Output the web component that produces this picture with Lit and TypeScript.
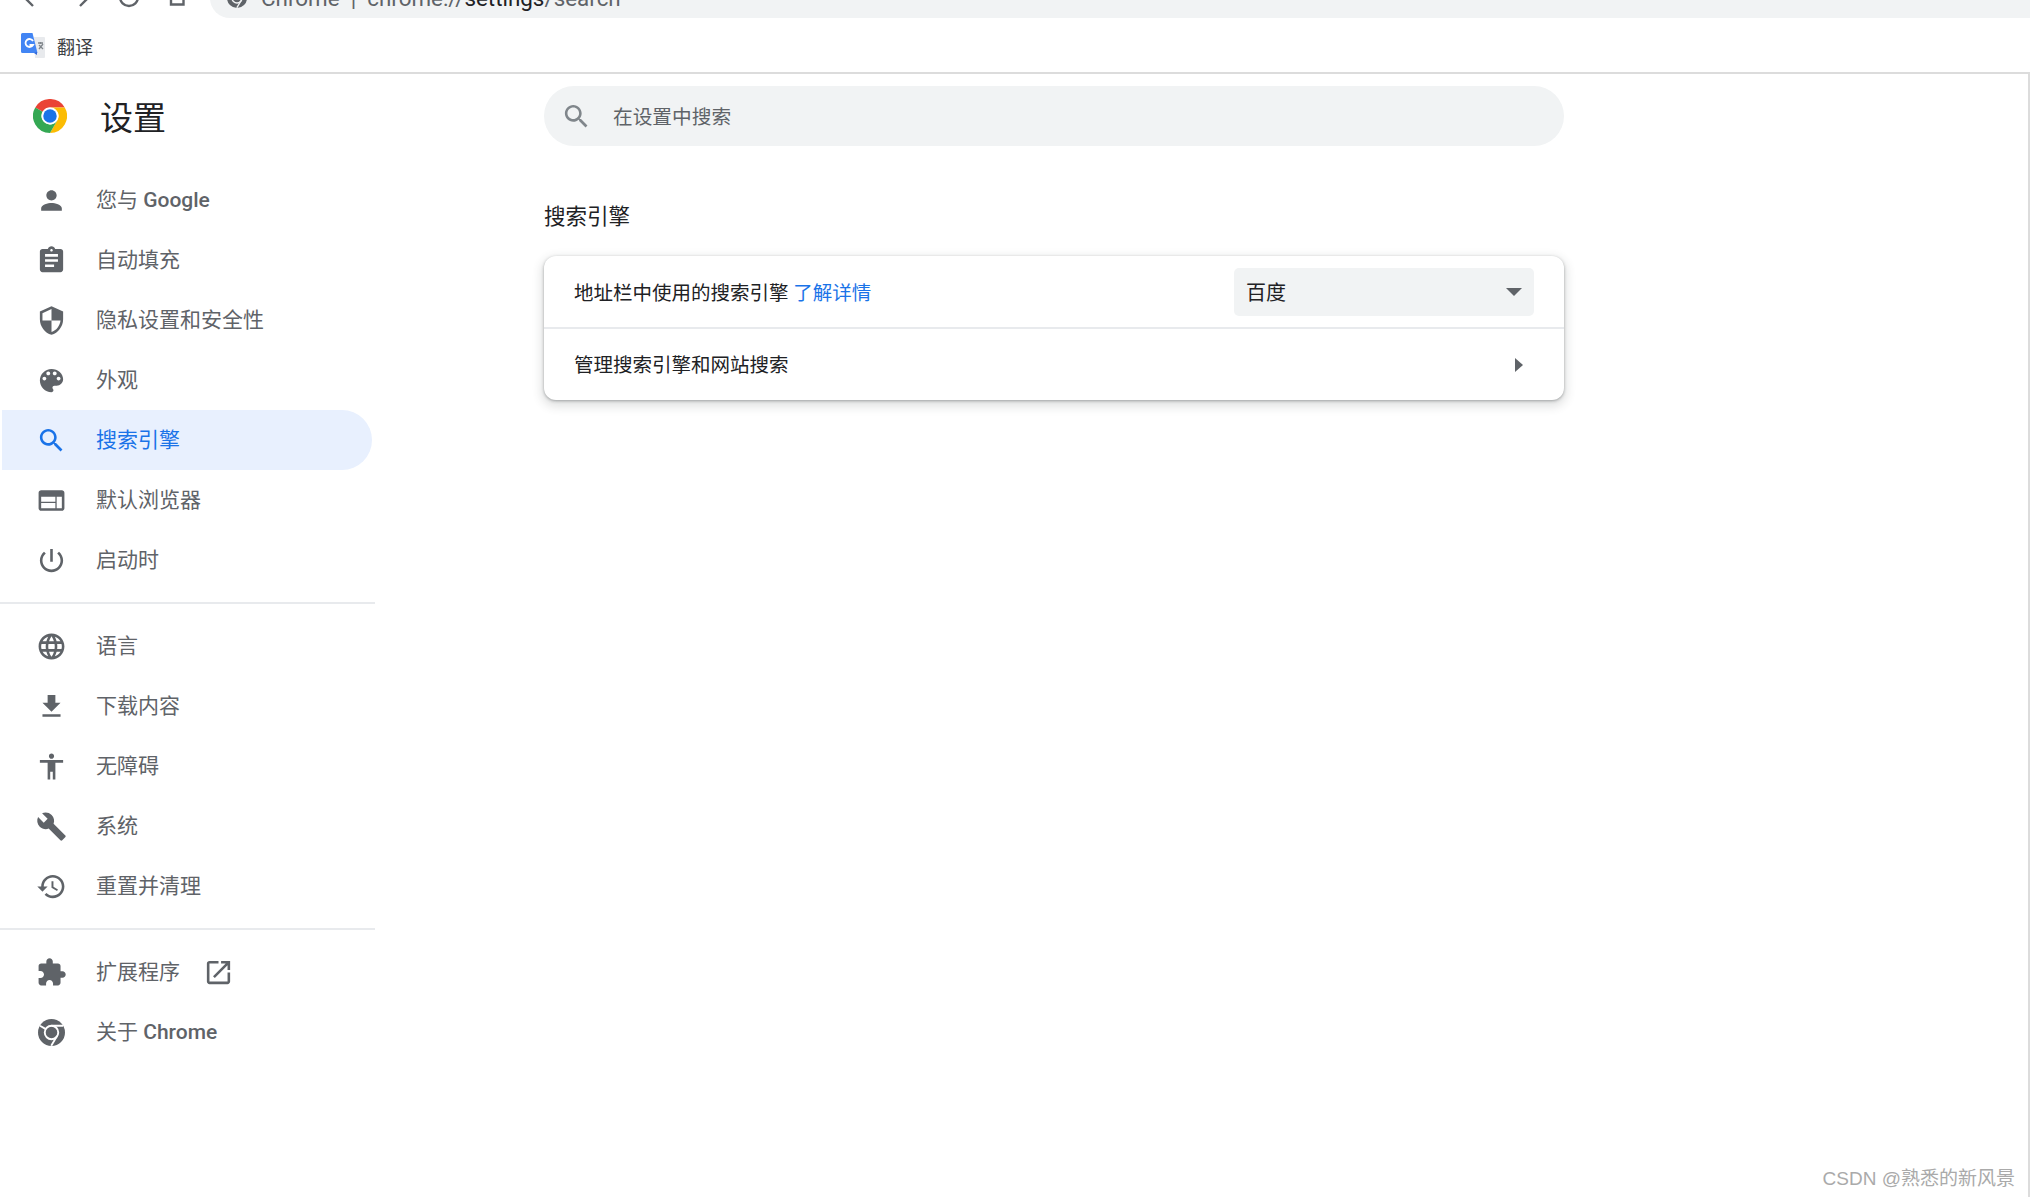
import { LitElement, html, css, svg } from "lit";
import { customElement } from "lit/decorators.js";

const P: Record<string, string> = {
  person: "M12 12c2.21 0 4-1.79 4-4s-1.79-4-4-4-4 1.79-4 4 1.79 4 4 4zm0 2c-2.67 0-8 1.34-8 4v2h16v-2c0-2.66-5.33-4-8-4z",
  assignment: "M19 3h-4.18C14.4 1.84 13.3 1 12 1c-1.3 0-2.4.84-2.82 2H5c-1.1 0-2 .9-2 2v14c0 1.1.9 2 2 2h14c1.1 0 2-.9 2-2V5c0-1.1-.9-2-2-2zm-7 0c.55 0 1 .45 1 1s-.45 1-1 1-1-.45-1-1 .45-1 1-1zm2 14H7v-2h7v2zm3-4H7v-2h10v2zm0-4H7V7h10v2z",
  security: "M12 1L3 5v6c0 5.55 3.84 10.74 9 12 5.16-1.26 9-6.45 9-12V5l-9-4zm0 10.99h7c-.53 4.12-3.28 7.79-7 8.94V12H5V6.3l7-3.11v8.8z",
  palette: "M12 3c-4.97 0-9 4.03-9 9s4.03 9 9 9c.83 0 1.5-.67 1.5-1.5 0-.39-.15-.74-.39-1.01-.23-.26-.38-.61-.38-.99 0-.83.67-1.5 1.5-1.5H16c2.76 0 5-2.24 5-5 0-4.42-4.03-8-9-8zm-5.5 9c-.83 0-1.5-.67-1.5-1.5S5.67 9 6.5 9 8 9.67 8 10.5 7.33 12 6.5 12zm3-4C8.67 8 8 7.33 8 6.5S8.67 5 9.5 5s1.5.67 1.5 1.5S10.33 8 9.5 8zm5 0c-.83 0-1.5-.67-1.5-1.5S13.67 5 14.5 5s1.5.67 1.5 1.5S15.33 8 14.5 8zm3 4c-.83 0-1.5-.67-1.5-1.5S16.67 9 17.5 9s1.5.67 1.5 1.5-.67 1.5-1.5 1.5z",
  search: "M15.5 14h-.79l-.28-.27C15.41 12.59 16 11.11 16 9.5 16 5.91 13.09 3 9.5 3S3 5.91 3 9.5 5.91 16 9.5 16c1.61 0 3.09-.59 4.23-1.57l.27.28v.79l5 4.99L20.49 19l-4.99-5zm-6 0C7.01 14 5 11.99 5 9.5S7.01 5 9.5 5 14 7.01 14 9.5 11.99 14 9.5 14z",
  web: "M20 4H4c-1.1 0-1.99.9-1.99 2L2 18c0 1.1.9 2 2 2h16c1.1 0 2-.9 2-2V6c0-1.1-.9-2-2-2zm-5 14H4v-4h11v4zm0-5H4V9h11v4zm5 5h-4V9h4v9z",
  power: "M13 3h-2v10h2V3zm4.83 2.17l-1.42 1.42C17.99 7.86 19 9.81 19 12c0 3.87-3.13 7-7 7s-7-3.13-7-7c0-2.19 1.01-4.14 2.58-5.42L6.17 5.17C4.23 6.82 3 9.26 3 12c0 4.97 4.03 9 9 9s9-4.03 9-9c0-2.74-1.23-5.18-3.17-6.83z",
  language: "M11.99 2C6.47 2 2 6.48 2 12s4.47 10 9.99 10C17.52 22 22 17.52 22 12S17.52 2 11.99 2zm6.93 6h-2.95c-.32-1.25-.78-2.45-1.38-3.56 1.84.63 3.37 1.91 4.33 3.56zM12 4.04c.83 1.2 1.48 2.53 1.91 3.96h-3.82c.43-1.43 1.08-2.76 1.91-3.96zM4.26 14C4.1 13.36 4 12.69 4 12s.1-1.36.26-2h3.38c-.08.66-.14 1.32-.14 2 0 .68.06 1.34.14 2H4.26zm.82 2h2.95c.32 1.25.78 2.45 1.38 3.56-1.84-.63-3.37-1.9-4.33-3.56zm2.95-8H5.08c.96-1.66 2.49-2.93 4.33-3.56C8.81 5.55 8.35 6.75 8.03 8zM12 19.96c-.83-1.2-1.48-2.53-1.91-3.96h3.82c-.43 1.43-1.08 2.76-1.91 3.96zM14.34 14H9.66c-.09-.66-.16-1.32-.16-2 0-.68.07-1.35.16-2h4.68c.09.65.16 1.32.16 2 0 .68-.07 1.34-.16 2zm.25 5.56c.6-1.11 1.06-2.31 1.38-3.56h2.95c-.96 1.65-2.49 2.93-4.33 3.56zM16.36 14c.08-.66.14-1.32.14-2 0-.68-.06-1.34-.14-2h3.38c.16.64.26 1.31.26 2s-.1 1.36-.26 2h-3.38z",
  download: "M19 9h-4V3H9v6H5l7 7 7-7zM5 18v2h14v-2H5z",
  accessibility: "M12 2c1.1 0 2 .9 2 2s-.9 2-2 2-2-.9-2-2 .9-2 2-2zm9 7h-6v13h-2v-6h-2v6H9V9H3V7h18v2z",
  build: "M22.7 19l-9.1-9.1c.9-2.3.4-5-1.5-6.9-2-2-5-2.4-7.4-1.3L9 6 6 9 1.6 4.7C.4 7.1.9 10.1 2.9 12.1c1.9 1.9 4.6 2.4 6.9 1.5l9.1 9.1c.4.4 1 .4 1.4 0l2.3-2.3c.5-.4.5-1.1.1-1.4z",
  restore: "M13 3c-4.97 0-9 4.03-9 9H1l3.89 3.89.07.14L9 12H6c0-3.87 3.13-7 7-7s7 3.13 7 7-3.13 7-7 7c-1.93 0-3.68-.79-4.94-2.06l-1.42 1.42C8.27 19.99 10.51 21 13 21c4.97 0 9-4.03 9-9s-4.03-9-9-9zm-1 5v5l4.28 2.54.72-1.21-3.5-2.08V8H12z",
  extension: "M20.5 11H19V7c0-1.1-.9-2-2-2h-4V3.5C13 2.12 11.88 1 10.5 1S8 2.12 8 3.5V5H4c-1.1 0-1.99.9-1.99 2v3.8H3.5c1.49 0 2.7 1.21 2.7 2.7s-1.21 2.7-2.7 2.7H2V20c0 1.1.9 2 2 2h3.8v-1.5c0-1.49 1.21-2.7 2.7-2.7 1.49 0 2.7 1.21 2.7 2.7V22H17c1.1 0 2-.9 2-2v-4h1.5c1.38 0 2.5-1.12 2.5-2.5S21.88 11 20.5 11z",
  open: "M19 19H5V5h7V3H5c-1.11 0-2 .9-2 2v14c0 1.1.89 2 2 2h14c1.1 0 2-.9 2-2v-7h-2v7zM14 3v2h3.59l-9.83 9.83 1.41 1.41L19 6.41V10h2V3h-7z",
};

const icon = (name: string) => html`<svg class="ic" viewBox="0 0 24 24"><path d=${P[name]} fill="currentColor"></path></svg>`;

const monoChrome = (cls: string, gap: string) => html`<svg class=${cls} viewBox="0 0 48 48">
  <circle cx="24" cy="24" r="24" fill="#5f6368"></circle>
  <circle cx="24" cy="24" r="12" fill="none" stroke=${gap} stroke-width="3.4"></circle>
  <path d="M24 12H44.5M14 18L3.5 12M34 30L23.5 47.5" fill="none" stroke=${gap} stroke-width="3.4"></path>
</svg>`;

type Item = { icon: string; label: unknown; active?: boolean; ext?: boolean; chrome?: boolean };
const latin = (t: string) => html`<span class="latin">${t}</span>`;
const groups: Item[][] = [
  [
    { icon: "person", label: html`您与 ${latin("Google")}` },
    { icon: "assignment", label: "自动填充" },
    { icon: "security", label: "隐私设置和安全性" },
    { icon: "palette", label: "外观" },
    { icon: "search", label: "搜索引擎", active: true },
    { icon: "web", label: "默认浏览器" },
    { icon: "power", label: "启动时" },
  ],
  [
    { icon: "language", label: "语言" },
    { icon: "download", label: "下载内容" },
    { icon: "accessibility", label: "无障碍" },
    { icon: "build", label: "系统" },
    { icon: "restore", label: "重置并清理" },
  ],
  [
    { icon: "extension", label: "扩展程序", ext: true },
    { icon: "", label: html`关于 ${latin("Chrome")}`, chrome: true },
  ],
];

@customElement("app-root")
export class AppRoot extends LitElement {
  static styles = css`
    :host {
      display: block;
      position: relative;
      width: 2030px;
      height: 1197px;
      overflow: hidden;
      background: #fff;
      font-family: Roboto, "Noto Sans CJK SC", sans-serif;
      color: #202124;
    }
    .toolbar { height: 18px; overflow: hidden; }
    .toolbar-row { display: flex; height: 40px; margin-top: -22px; }
    .nav { width: 210px; height: 40px; flex: none; }
    .omnibox {
      flex: 1;
      display: flex;
      align-items: center;
      gap: 14px;
      padding-left: 17px;
      background: #f1f3f4;
      border-radius: 20px 0 0 20px;
      font-size: 22.4px;
      color: #5f6368;
      white-space: pre;
    }
    .omni-ic { width: 20px; height: 20px; flex: none; }
    .omnibox b { font-weight: 400; color: #202124; }
    .bookmarks {
      height: 54px;
      box-sizing: border-box;
      padding: 2px 0 0 21px;
      display: flex;
      align-items: center;
      gap: 12px;
      font-size: 18px;
      color: #3c4043;
    }
    .rule { height: 2px; background: #dcdcdc; }
    .translate { width: 24px; height: 26px; flex: none; }
    .page { display: flex; height: 1123px; border-right: 2px solid #dcdcdc; }
    .side { width: 375px; flex: none; }
    .brand { display: flex; align-items: center; height: 84px; padding-left: 33px; gap: 33px; margin-bottom: 12px; }
    .logo { width: 34px; height: 34px; flex: none; }
    .brand h1 { margin: 5px 0 0; font-size: 33px; font-weight: 400; line-height: 44px; color: #202124; }
    .divider { height: 2px; background: #e8eaed; margin: 12px 0 12px; }
    .item {
      display: flex;
      align-items: center;
      box-sizing: border-box;
      height: 60px;
      width: 370px;
      margin-left: 2px;
      padding-left: 33.5px;
      border-radius: 0 30px 30px 0;
      font-size: 21px;
      color: #5f6368;
    }
    .item > span { padding-bottom: 4px; }
    .item.active { background: #e8f0fe; color: #1a73e8; }
    .item .ic { width: 31px; height: 31px; flex: none; margin-right: 29.5px; }
    .item .ic.ext { margin: 0 0 0 23px; }
    .item .cr { width: 27px; height: 27px; flex: none; margin: 0 31.5px 0 2px; }
    .latin { font-weight: 500; }
    .main { width: 1020px; margin-left: 169px; }
    .searchbox {
      display: flex;
      align-items: center;
      margin-top: 12px;
      height: 60px;
      padding-left: 17px;
      gap: 21px;
      border-radius: 30px;
      background: #f1f3f4;
      color: #5f6368;
      font-size: 19.7px;
    }
    .searchbox span { padding-bottom: 2px; }
    .searchbox .ic { width: 31px; height: 31px; color: #80868b; }
    h2 { margin: 56px 0 0; height: 30px; line-height: 30px; font-size: 21.5px; font-weight: 400; color: #202124; }
    .card {
      margin-top: 24px;
      height: 144px;
      border-radius: 12px;
      background: #fff;
      box-shadow: 0 1px 3px rgba(60, 64, 67, 0.42), 0 4px 10px 3px rgba(60, 64, 67, 0.14);
      font-size: 19.5px;
    }
    .row { display: flex; align-items: center; padding: 0 30px; box-sizing: border-box; }
    .row.first { height: 73px; border-bottom: 2px solid #e8eaed; }
    .row.second { height: 71px; }
    .row .text { flex: 1; white-space: pre; }
    .row.second .text { padding-bottom: 2px; }
    a { color: #1a73e8; text-decoration: none; }
    .select {
      width: 300px;
      height: 48px;
      box-sizing: border-box;
      display: flex;
      align-items: center;
      justify-content: space-between;
      padding: 0 12px;
      border-radius: 5px;
      background: #f1f3f4;
      font-size: 20px;
    }
    .caret { width: 16px; height: 8px; flex: none; }
    .chev { width: 8px; height: 14px; flex: none; margin-right: 11px; }
    .watermark {
      position: absolute;
      right: 15px;
      bottom: 4px;
      font: 19px/28px "Liberation Sans", "Noto Sans CJK SC", sans-serif;
      color: #aaa;
    }
  `;

  render() {
    return html`
      <div class="toolbar">
        <div class="toolbar-row">
          <svg class="nav" viewBox="0 0 210 40">
            ${svg`<g fill="none" stroke="#5f6368" stroke-width="2.4">
              <path d="M33 28L23.5 18.5L33 9"></path>
              <path d="M80 28L89.5 18.5L80 9"></path>
              <circle cx="129" cy="19" r="9"></circle>
              <path d="M171 14V26.5H183.5V14"></path>
            </g>`}
          </svg>
          <div class="omnibox">
            ${monoChrome("omni-ic", "#f1f3f4")}<span>Chrome  |  chrome://<b>settings</b>/search</span>
          </div>
        </div>
      </div>
      <div class="bookmarks">
        <svg class="translate" viewBox="0 0 24 26">
          <path d="M13 4H23a1 1 0 0 1 1 1V24a1 1 0 0 1-1 1H14z" fill="#e8eaed"></path>
          <path d="M17 10h5M19.5 9v2M18 16l4-5M18 12l4 4" fill="none" stroke="#80868b" stroke-width="1.3"></path>
          <path d="M1.5 0H11.5L16.5 20H1.5A1.5 1.5 0 0 1 0 18.5V1.5A1.5 1.5 0 0 1 1.5 0Z" fill="#4285f4"></path>
          <path d="M13 20L16 22V19Z" fill="#3367d6"></path>
          <path d="M12 8A4 4 0 1 0 12 12H8.5" fill="none" stroke="#fff" stroke-width="1.8"></path>
        </svg>
        <span>翻译</span>
      </div>
      <div class="rule"></div>
      <div class="page">
        <nav class="side">
          <div class="brand">
            <svg class="logo" viewBox="0 0 48 48">
              <path d="M3.2 12A24 24 0 0 1 44.8 12H24A12 12 0 0 0 13.6 18Z" fill="#ea4335"></path>
              <path d="M44.8 12A24 24 0 0 1 24 48L34.4 30A12 12 0 0 0 24 12Z" fill="#fbbc04"></path>
              <path d="M24 48A24 24 0 0 1 3.2 12L13.6 18A12 12 0 0 0 34.4 30Z" fill="#34a853"></path>
              <circle cx="24" cy="24" r="12" fill="#fff"></circle>
              <circle cx="24" cy="24" r="9.5" fill="#1a73e8"></circle>
            </svg>
            <h1>设置</h1>
          </div>
          ${groups.map(
            (g, i) => html`
              ${i > 0 ? html`<div class="divider"></div>` : ""}
              <div class="group">
                ${g.map(
                  (it) => html`<div class="item ${it.active ? "active" : ""}">
                    ${it.chrome ? monoChrome("cr", "#fff") : icon(it.icon)}
                    <span>${it.label}</span>
                    ${it.ext ? html`<svg class="ic ext" viewBox="0 0 24 24"><path d=${P.open} fill="currentColor"></path></svg>` : ""}
                  </div>`
                )}
              </div>
            `
          )}
        </nav>
        <main class="main">
          <div class="searchbox">${icon("search")}<span>在设置中搜索</span></div>
          <h2>搜索引擎</h2>
          <section class="card">
            <div class="row first">
              <span class="text">地址栏中使用的搜索引擎 <a>了解详情</a></span>
              <div class="select">
                <span>百度</span>
                <svg class="caret" viewBox="0 0 16 8"><path d="M0 0H16L8 8Z" fill="#5f6368"></path></svg>
              </div>
            </div>
            <div class="row second">
              <span class="text">管理搜索引擎和网站搜索</span>
              <svg class="chev" viewBox="0 0 8 14"><path d="M0 0L8 7L0 14Z" fill="#5f6368"></path></svg>
            </div>
          </section>
        </main>
      </div>
      <div class="watermark">CSDN @熟悉的新风景</div>
    `;
  }
}
